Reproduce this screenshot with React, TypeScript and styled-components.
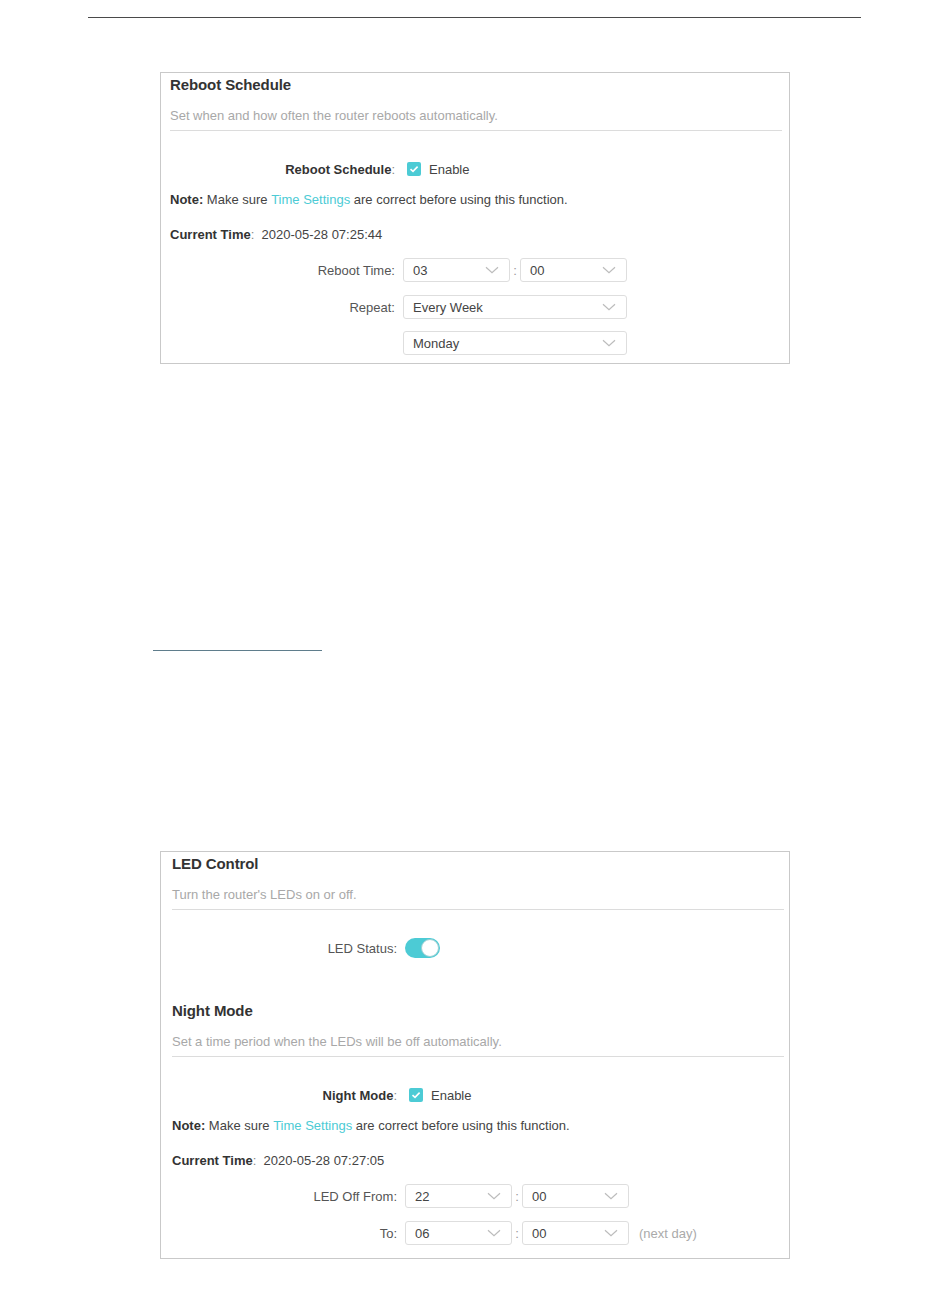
import React from "react";
import styled, { createGlobalStyle } from "styled-components";

const GlobalStyle = createGlobalStyle`
  html, body { margin: 0; padding: 0; background: #ffffff; }
  body { font-family: "Liberation Sans", Arial, sans-serif; color: #333; }
`;

const TEAL = "#4ccbd5";

const Page = styled.div`
  width: 950px;
  height: 1297px;
  display: flex;
  flex-direction: column;
  padding-top: 17px;
  box-sizing: border-box;
`;

const TopRule = styled.hr`
  margin: 0 89px 0 88px;
  border: none;
  border-top: 1px solid #4a4a4a;
  height: 0;
`;

const Panel = styled.section<{ $top: number; $height: number; $inset: number }>`
  margin: ${(p) => p.$top}px 0 0 160px;
  width: 630px;
  height: ${(p) => p.$height}px;
  box-sizing: border-box;
  border: 1px solid #c9c9c9;
  padding: 2px ${(p) => 16 - p.$inset}px 0 ${(p) => p.$inset}px;
  display: flex;
  flex-direction: column;
`;

const Title = styled.h2<{ $mt?: number }>`
  margin: ${(p) => p.$mt ?? 0}px 0 0;
  font-size: 15px;
  line-height: 20px;
  font-weight: bold;
  color: #333;
  letter-spacing: -0.1px;
`;

const Subtitle = styled.p`
  margin: 13px 0 0;
  font-size: 13px;
  line-height: 16px;
  color: #a8a8a8;
`;

const Divider = styled.div`
  margin-top: 6px;
  border-top: 1px solid #dcdcdc;
`;

const Row = styled.div<{ $mt: number }>`
  margin-top: ${(p) => p.$mt}px;
  height: 24px;
  display: flex;
  align-items: center;
  font-size: 13px;
  color: #444;
`;

const Label = styled.div<{ $bold?: boolean }>`
  width: 225px;
  flex: none;
  text-align: right;
  margin-right: 8px;
  font-weight: ${(p) => (p.$bold ? "bold" : "normal")};
  color: ${(p) => (p.$bold ? "#333" : "#555")};
`;

const Colon = styled.span`
  font-weight: normal;
  color: #888;
`;

const Strong = styled.b`
  color: #333;
`;

const Link = styled.span`
  color: ${TEAL};
`;

const CheckBox = styled.span`
  width: 14px;
  height: 14px;
  margin-left: 4px;
  margin-right: 8px;
  border-radius: 2px;
  background: ${TEAL};
  display: inline-flex;
  align-items: center;
  justify-content: center;
`;

const SelectBox = styled.div<{ $w: number }>`
  width: ${(p) => p.$w}px;
  height: 24px;
  box-sizing: border-box;
  border: 1px solid #dedede;
  border-radius: 3px;
  padding: 0 10px 0 9px;
  display: flex;
  align-items: center;
  justify-content: space-between;
  font-size: 13px;
  color: #444;
`;

const TimeSep = styled.span`
  width: 10px;
  text-align: center;
  color: #999;
`;

const Muted = styled.span`
  margin-left: 10px;
  color: #aaa;
`;

const Switch = styled.span`
  width: 35px;
  height: 20px;
  border-radius: 10px;
  background: ${TEAL};
  display: inline-flex;
  align-items: center;
  justify-content: flex-end;
  box-sizing: border-box;
  padding-right: 1px;
`;

const Knob = styled.span`
  width: 18px;
  height: 18px;
  border-radius: 50%;
  background: #fff;
  box-sizing: border-box;
  border: 1px solid #9ccfd3;
`;

const FootRule = styled.div`
  margin: 286px 0 0 153px;
  width: 169px;
  border-top: 1px solid #5f7d8c;
`;

const Chevron = () => (
  <svg width="14" height="8" viewBox="0 0 14 8" fill="none">
    <path d="M1 1.2 L7 6.6 L13 1.2" stroke="#bcbcbc" strokeWidth="1.2" />
  </svg>
);

const Check = () => (
  <svg width="10" height="8" viewBox="0 0 10 8" fill="none">
    <path d="M1.5 4.2 L4 6.4 L8.6 1.6" stroke="#fff" strokeWidth="1.6" />
  </svg>
);

const Select = ({ value, w }: { value: string; w: number }) => (
  <SelectBox $w={w}>
    <span>{value}</span>
    <Chevron />
  </SelectBox>
);

const TimePick = ({ h, m }: { h: string; m: string }) => (
  <>
    <Select value={h} w={107} />
    <TimeSep>:</TimeSep>
    <Select value={m} w={107} />
  </>
);

const Enable = () => (
  <>
    <CheckBox>
      <Check />
    </CheckBox>
    <span>Enable</span>
  </>
);

const Note = ({ mt }: { mt: number }) => (
  <Row $mt={mt}>
    <Strong>Note:</Strong>&nbsp;Make sure&nbsp;<Link>Time Settings</Link>&nbsp;are correct before using this function.
  </Row>
);

const CurrentTime = ({ mt, time }: { mt: number; time: string }) => (
  <Row $mt={mt}>
    <Strong>Current Time</Strong>
    <Colon>:</Colon>&nbsp;&nbsp;{time}
  </Row>
);

export default function App() {
  return (
    <Page>
      <GlobalStyle />
      <TopRule />
      <Panel $top={54} $height={292} $inset={9}>
        <Title>Reboot Schedule</Title>
        <Subtitle>Set when and how often the router reboots automatically.</Subtitle>
        <Divider />
        <Row $mt={26}>
          <Label $bold>
            Reboot Schedule<Colon>:</Colon>
          </Label>
          <Enable />
        </Row>
        <Note mt={6} />
        <CurrentTime mt={11} time="2020-05-28 07:25:44" />
        <Row $mt={12}>
          <Label>Reboot Time:</Label>
          <TimePick h="03" m="00" />
        </Row>
        <Row $mt={13}>
          <Label>Repeat:</Label>
          <Select value="Every Week" w={224} />
        </Row>
        <Row $mt={12}>
          <Label />
          <Select value="Monday" w={224} />
        </Row>
      </Panel>
      <FootRule />
      <Panel $top={200} $height={408} $inset={11}>
        <Title>LED Control</Title>
        <Subtitle>Turn the router's LEDs on or off.</Subtitle>
        <Divider />
        <Row $mt={26}>
          <Label>LED Status:</Label>
          <Switch>
            <Knob />
          </Switch>
        </Row>
        <Title $mt={41}>Night Mode</Title>
        <Subtitle>Set a time period when the LEDs will be off automatically.</Subtitle>
        <Divider />
        <Row $mt={26}>
          <Label $bold>
            Night Mode<Colon>:</Colon>
          </Label>
          <Enable />
        </Row>
        <Note mt={6} />
        <CurrentTime mt={11} time="2020-05-28 07:27:05" />
        <Row $mt={12}>
          <Label>LED Off From:</Label>
          <TimePick h="22" m="00" />
        </Row>
        <Row $mt={13}>
          <Label>To:</Label>
          <TimePick h="06" m="00" />
          <Muted>(next day)</Muted>
        </Row>
      </Panel>
    </Page>
  );
}
